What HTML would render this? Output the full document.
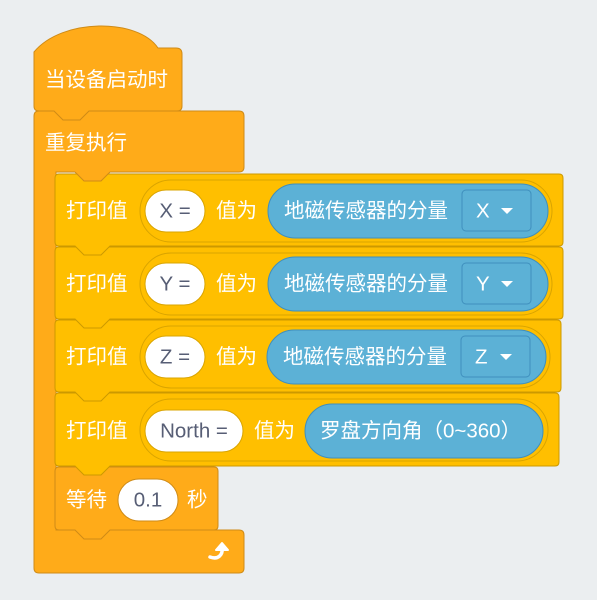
<!DOCTYPE html>
<html><head><meta charset="utf-8"><style>
html,body{margin:0;padding:0;background:#ebeef0;}
svg{display:block}
text{font-family:"Liberation Sans","Noto Sans CJK SC",sans-serif;font-size:20.5px;fill:#fff;dominant-baseline:central}
.d{fill:#575e75}
</style></head><body>
<svg width="597" height="600" viewBox="0 0 597 600" xmlns="http://www.w3.org/2000/svg">
<rect width="597" height="600" fill="#ebeef0"/>
<!-- forever C -->
<path d="M34,116 Q34,111 39,111 L239,111 Q244,111 244,116 L244,167 Q244,172 239,172 L56,172 L56,530 L239,530 Q244,530 244,535 L244,568 Q244,573 239,573 L39,573 Q34,573 34,568 Z" fill="#ffab19" stroke="#cf8b17"/>
<!-- wait -->
<path d="M55,471 Q55,467 59,467 L214,467 Q218,467 218,471 L218,526 Q218,530 214,530 L110,530 L101,539 L84,539 L75,530 L59,530 Q55,530 55,526 Z" fill="#ffab19" stroke="#cf8b17"/>
<!-- print blocks bottom-up -->
<path d="M55,397 Q55,393 59,393 L555,393 Q559,393 559,397 L559,462 Q559,466 555,466 L110,466 L101,475 L84,475 L75,466 L59,466 Q55,466 55,462 Z" fill="#ffbf00" stroke="#cc9900"/>
<path d="M55,324 Q55,320 59,320 L557,320 Q561,320 561,324 L561,388 Q561,392 557,392 L110,392 L101,401 L84,401 L75,392 L59,392 Q55,392 55,388 Z" fill="#ffbf00" stroke="#cc9900"/>
<path d="M55,251 Q55,247 59,247 L559,247 Q563,247 563,251 L563,315 Q563,319 559,319 L110,319 L101,328 L84,328 L75,319 L59,319 Q55,319 55,315 Z" fill="#ffbf00" stroke="#cc9900"/>
<path d="M55,178 Q55,174 59,174 L559,174 Q563,174 563,178 L563,242 Q563,246 559,246 L110,246 L101,255 L84,255 L75,246 L59,246 Q55,246 55,242 Z" fill="#ffbf00" stroke="#cc9900"/>
<!-- forever header tab -->
<path d="M75,171.5 L84,181 L101,181 L110,171.5 Z" fill="#ffab19"/>
<path d="M75,172 L84,181 L101,181 L110,172" fill="none" stroke="#cf8b17"/>
<!-- hat -->
<path d="M34,52 C62,18 138,18 158,48 L176,48 Q182,48 182,54 L182,106 Q182,111 177,111 L89,111 L80,120 L63,120 L54,111 L39,111 Q34,111 34,106 Z" fill="#ffab19" stroke="#cf8b17"/>

<text x="45" y="80">当设备启动时</text>
<text x="45" y="143">重复执行</text>

<g>
<text x="66" y="211">打印值</text>
<rect x="140" y="180" width="412" height="62" rx="31" fill="#ffbf00" stroke="#d9a400"/>
<rect x="145" y="190" width="60" height="42" rx="21" fill="#fff" stroke="#d9a400"/>
<text x="175" y="211" class="d" text-anchor="middle">X =</text>
<text x="216" y="211">值为</text>
<rect x="268" y="184" width="280" height="54" rx="27" fill="#5cb1d6" stroke="#3f8fbd"/>
<text x="284" y="211">地磁传感器的分量</text>
<rect x="462" y="190" width="69" height="41" rx="4" fill="#5cb1d6" stroke="#3f8fbd"/>
<text x="476" y="211">X</text>
<path d="M501,208 L513,208 L507,214 Z" fill="#fff"/>
</g>
<g>
<text x="66" y="284">打印值</text>
<rect x="140" y="253" width="412" height="62" rx="31" fill="#ffbf00" stroke="#d9a400"/>
<rect x="145" y="263" width="60" height="42" rx="21" fill="#fff" stroke="#d9a400"/>
<text x="175" y="284" class="d" text-anchor="middle">Y =</text>
<text x="216" y="284">值为</text>
<rect x="268" y="257" width="280" height="54" rx="27" fill="#5cb1d6" stroke="#3f8fbd"/>
<text x="284" y="284">地磁传感器的分量</text>
<rect x="462" y="263" width="69" height="41" rx="4" fill="#5cb1d6" stroke="#3f8fbd"/>
<text x="476" y="284">Y</text>
<path d="M501,281 L513,281 L507,287 Z" fill="#fff"/>
</g>
<g>
<text x="66" y="357">打印值</text>
<rect x="140" y="326" width="410" height="62" rx="31" fill="#ffbf00" stroke="#d9a400"/>
<rect x="145" y="336" width="60" height="42" rx="21" fill="#fff" stroke="#d9a400"/>
<text x="175" y="357" class="d" text-anchor="middle">Z =</text>
<text x="216" y="357">值为</text>
<rect x="267" y="330" width="279" height="54" rx="27" fill="#5cb1d6" stroke="#3f8fbd"/>
<text x="283" y="357">地磁传感器的分量</text>
<rect x="461" y="336" width="69" height="41" rx="4" fill="#5cb1d6" stroke="#3f8fbd"/>
<text x="475" y="357">Z</text>
<path d="M500,354 L512,354 L506,360 Z" fill="#fff"/>
</g>
<g>
<text x="66" y="431">打印值</text>
<rect x="140" y="399" width="408" height="62" rx="31" fill="#ffbf00" stroke="#d9a400"/>
<rect x="145" y="410" width="98" height="42" rx="21" fill="#fff" stroke="#d9a400"/>
<text x="194" y="431" class="d" text-anchor="middle">North =</text>
<text x="254" y="431">值为</text>
<rect x="305" y="404" width="238" height="54" rx="27" fill="#5cb1d6" stroke="#3f8fbd"/>
<text x="320" y="431">罗盘方向角（0~360）</text>
</g>
<text x="66" y="500">等待</text>
<rect x="118" y="479" width="60" height="42" rx="21" fill="#fff" stroke="#cf8b17"/>
<text x="148" y="500" class="d" text-anchor="middle">0.1</text>
<text x="187" y="500">秒</text>
<path d="M210,557 C218,560 223,555 222,548" fill="none" stroke="#fff" stroke-width="3.5" stroke-linecap="round"/>
<path d="M216,550 L222,543 L228,550 Z" fill="#fff" stroke="#fff" stroke-width="2" stroke-linejoin="round"/>
</svg>
</body></html>
